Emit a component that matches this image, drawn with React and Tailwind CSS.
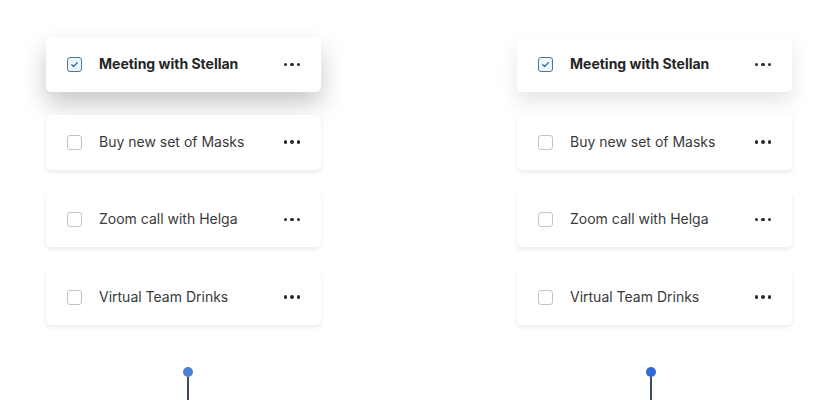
const tasks = [
  { title: "Meeting with Stellan", done: true },
  { title: "Buy new set of Masks", done: false },
  { title: "Zoom call with Helga", done: false },
  { title: "Virtual Team Drinks", done: false },
];

function Checkbox({ checked }) {
  if (checked) {
    return (
      <span className="flex h-[15px] w-[15px] items-center justify-center rounded-[3px] border-[1.5px] border-[#3f79a6] bg-[#eef5fb]">
        <svg width="9" height="9" viewBox="0 0 10 10" fill="none">
          <path d="M2 5.2l2 2L8 3" stroke="#3f6f95" strokeWidth="1.5" strokeLinecap="round" strokeLinejoin="round" />
        </svg>
      </span>
    );
  }
  return <span className="h-[15px] w-[15px] rounded-[3px] border-[1.5px] border-[#c4c4c4] bg-white" />;
}

function Dots() {
  return (
    <span className="flex items-center gap-[3px]">
      <span className="h-[3.5px] w-[3.5px] rounded-full bg-[#2a2a2a]" />
      <span className="h-[3.5px] w-[3.5px] rounded-full bg-[#2a2a2a]" />
      <span className="h-[3.5px] w-[3.5px] rounded-full bg-[#2a2a2a]" />
    </span>
  );
}

function TaskCard({ task, shadow }) {
  return (
    <div className={`flex h-[55px] items-center rounded-[5px] bg-white pl-[21px] pr-[21px] ${shadow}`}>
      <Checkbox checked={task.done} />
      <span
        className={`ml-[17px] flex-1 pb-[2px] text-[14px] ${task.done ? "font-bold text-[#252525]" : "text-[#3a3a3a]"}`}
      >
        {task.title}
      </span>
      <Dots />
    </div>
  );
}

function Pin({ offset, color }) {
  return (
    <div className={`mt-[42px] flex flex-col items-center ${offset}`}>
      <span className={`h-[10px] w-[10px] rounded-full ${color}`} />
      <span className="h-[26px] w-[2px] bg-[#3d4a63]" />
    </div>
  );
}

function Column({ firstShadow, pinOffset, pinColor }) {
  return (
    <div className="flex w-[275px] flex-col">
      <div className="flex flex-col gap-[22.5px]">
        {tasks.map((task, i) => (
          <TaskCard
            key={i}
            task={task}
            shadow={i === 0 ? firstShadow : "shadow-[0_2px_5px_rgba(0,0,0,0.09)]"}
          />
        ))}
      </div>
      <div className="flex">
        <Pin offset={pinOffset} color={pinColor} />
      </div>
    </div>
  );
}

export default function App() {
  return (
    <div
      className="flex h-[400px] w-[837px] gap-[196px] overflow-hidden bg-white pl-[46px] pt-[37px]"
      style={{ fontFamily: "Inter, 'Noto Sans', sans-serif" }}
    >
      <Column
        firstShadow="shadow-[0_12px_24px_rgba(0,0,0,0.22)]"
        pinOffset="ml-[137px]"
        pinColor="bg-[#4a80d4]"
      />
      <Column
        firstShadow="shadow-[0_10px_20px_rgba(0,0,0,0.1)]"
        pinOffset="ml-[129px]"
        pinColor="bg-[#2f68d8]"
      />
    </div>
  );
}
